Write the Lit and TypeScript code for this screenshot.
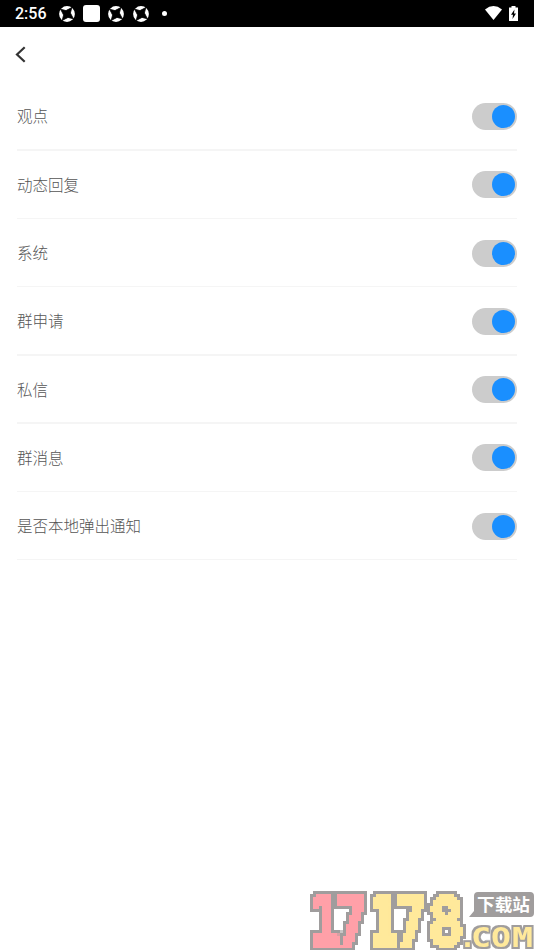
import { LitElement, html, svg, css } from 'lit'

const DIGITS = [
  { text: '1', x: 310, size: 67, width: 30, color: '#ffa0a8' },
  { text: '7', x: 336, size: 67, width: 32, color: '#ffa0a8' },
  { text: '1', x: 369, size: 67, width: 30, color: '#ffe99b' },
  { text: '7', x: 395, size: 67, width: 32, color: '#ffe99b' },
  { text: '8', x: 428, size: 66, width: 36, color: '#ffe99b' }
]

const SUFFIX = [
  { text: '.', x: 459, width: 17 },
  { text: 'C', x: 471, width: 20 },
  { text: 'O', x: 491, width: 20 },
  { text: 'M', x: 512, width: 21 }
]

export class StatusBar extends LitElement {
  static styles = [
    css`
      :host {
        display: flex;
        align-items: center;
        justify-content: space-between;
        height: 27px;
        box-sizing: border-box;
        padding: 0 16px 0 15px;
        background: #000;
        color: #fff;
        font: 500 16px Roboto, sans-serif;
      }
      .left,
      .right {
        display: flex;
        align-items: center;
      }
      .right {
        padding-bottom: 1px;
      }
      .time {
        width: 44px;
        line-height: 26px;
        padding-top: 1px;
      }
      .shutter {
        width: 16px;
        height: 16px;
      }
      .square {
        width: 17px;
        height: 17px;
        margin: 0 8px;
        border-radius: 3px;
        background: #fff;
      }
      .gap {
        margin-right: 9px;
      }
      .dot {
        width: 5px;
        height: 5px;
        margin-left: 13px;
        border-radius: 50%;
        background: #fff;
      }
      .wifi {
        width: 17px;
        height: 14px;
        margin-right: 7px;
      }
      .battery {
        width: 9px;
        height: 15px;
      }
    `
  ]

  shutter(extra = '') {
    return html`
      <svg class="shutter ${extra}" viewBox="0 0 16 16">
        <circle cx="8" cy="8" r="7.9" fill="#fff" />
        <path
          d="M1.6 3.2 7 4.6 12.8 1.6 11.4 7 14.4 12.8 9 11.4 3.2 14.4 4.6 9z"
          stroke="#000"
          stroke-width=".8"
        />
      </svg>
    `
  }

  render() {
    return html`
      <div class="left">
        <span class="time">2:56</span>
        ${this.shutter()}
        <span class="square"></span>
        ${this.shutter('gap')} ${this.shutter()}
        <span class="dot"></span>
      </div>
      <div class="right">
        <svg class="wifi" viewBox="0 0 17 14">
          <path d="M0 3.4Q8.5-3.2 17 3.4L8.5 14z" fill="#fff" />
        </svg>
        <svg class="battery" viewBox="0 0 9 15">
          <path d="M2.5 0h4v1.5H9V15H0V1.5h2.5z" fill="#fff" />
          <path d="M5.5 3.5 2 8.8h2L3.5 13 7 7.5H5z" />
        </svg>
      </div>
    `
  }
}
customElements.define('status-bar', StatusBar)

export class ToggleRow extends LitElement {
  static properties = {
    label: { type: String },
    on: { type: Boolean }
  }

  static styles = [
    css`
      :host {
        display: flex;
        flex-direction: column;
        height: 68.27px;
      }
      .content {
        flex: 1;
        display: flex;
        align-items: center;
        justify-content: space-between;
        padding-top: 1.2px;
      }
      .label {
        padding-bottom: 2.2px;
        font-size: 15.5px;
        font-weight: 300;
        line-height: 24px;
        color: #555;
      }
      .switch {
        display: flex;
        width: 45px;
        height: 27px;
        box-sizing: border-box;
        padding: 2px;
        border: none;
        border-radius: 14px;
        background: #ccc;
      }
      .switch.on {
        justify-content: flex-end;
      }
      .thumb {
        width: 23px;
        height: 23px;
        border-radius: 50%;
        background: #1a8fff;
      }
      .line {
        height: 1.4px;
        background: #f5f5f5;
      }
    `
  ]

  declare label: string
  declare on: boolean

  toggle() {
    this.on = !this.on
  }

  render() {
    return html`
      <div class="content">
        <span class="label">${this.label}</span>
        <button class="switch ${this.on ? 'on' : ''}" @click=${this.toggle}>
          <span class="thumb"></span>
        </button>
      </div>
      <div class="line"></div>
    `
  }
}
customElements.define('toggle-row', ToggleRow)

export class SiteMark extends LitElement {
  static styles = [
    css`
      :host {
        display: block;
      }
      .mark {
        display: block;
        width: 224px;
        height: 62px;
      }
      .digit {
        font-family: 'DejaVu Sans Mono', monospace;
        font-weight: bold;
        stroke-width: 3.6px;
      }
      .com {
        font: bold 26px 'DejaVu Sans Mono', monospace;
        fill: #ffe99b;
      }
      .tag {
        font: bold 17px 'Noto Sans CJK SC', sans-serif;
        fill: #fff;
      }
    `
  ]

  render() {
    return html`
      <svg class="mark" viewBox="310 888 224 62">
        <defs>
          <!-- samples one point per 3px cell and grows it into a block -->
          <filter
            id="blocks"
            filterUnits="userSpaceOnUse"
            x="310"
            y="888"
            width="160"
            height="66"
            color-interpolation-filters="sRGB"
          >
            <feFlood x="311" y="889" width="1" height="1" flood-color="#000" />
            <feComposite x="310" y="888" width="3" height="3" />
            <feTile result="grid" />
            <feComposite in="SourceGraphic" in2="grid" operator="in" />
            <feMorphology operator="dilate" radius="1" />
            <feComponentTransfer result="fill">
              <feFuncA type="linear" slope="100" intercept="-50" />
            </feComponentTransfer>
            <feMorphology operator="dilate" radius="3" result="grown" />
            <feFlood flood-color="#a09d9d" />
            <feComposite in2="grown" operator="in" result="edge" />
            <feMerge>
              <feMergeNode in="edge" />
              <feMergeNode in="fill" />
            </feMerge>
          </filter>
          <filter
            id="outline"
            filterUnits="userSpaceOnUse"
            x="460"
            y="920"
            width="78"
            height="34"
            color-interpolation-filters="sRGB"
          >
            <feMorphology in="SourceAlpha" operator="dilate" radius="2" result="grown" />
            <feFlood flood-color="#a09d9d" />
            <feComposite in2="grown" operator="in" result="edge" />
            <feMerge>
              <feMergeNode in="edge" />
              <feMergeNode in="SourceGraphic" />
            </feMerge>
          </filter>
        </defs>
        <g filter="url(#blocks)">
          ${DIGITS.map(
            (d) => svg`<text class="digit" x=${d.x} y="945" font-size=${d.size} fill=${d.color}
              stroke=${d.color} textLength=${d.width} lengthAdjust="spacingAndGlyphs">${d.text}</text>`
          )}
        </g>
        <g filter="url(#outline)">
          ${SUFFIX.map(
            (s) => svg`<text class="com" x=${s.x} y="947" textLength=${s.width}
              lengthAdjust="spacingAndGlyphs">${s.text}</text>`
          )}
        </g>
        <path d="M478 892h52q4 0 4 4v17q0 4-4 4h-61l5-6v-15q0-4 4-4z" fill="#a09d9d" />
        <text class="tag" x="477" y="911" textLength="53" lengthAdjust="spacingAndGlyphs">下载站</text>
      </svg>
    `
  }
}
customElements.define('site-mark', SiteMark)

export class AppRoot extends LitElement {
  static styles = [
    css`
      :host {
        display: flex;
        flex-direction: column;
        height: 950px;
        overflow: hidden;
        background: #fff;
        font-family: 'Noto Sans CJK SC', sans-serif;
      }
      .nav {
        display: flex;
        align-items: center;
        height: 55.5px;
        padding-left: 15px;
      }
      .back {
        width: 11px;
        height: 17px;
      }
      .list {
        flex: 1;
        padding: 0 17px;
      }
      .mark {
        align-self: flex-end;
      }
    `
  ]

  render() {
    const labels = ['观点', '动态回复', '系统', '群申请', '私信', '群消息', '是否本地弹出通知']
    return html`
      <status-bar></status-bar>
      <div class="nav">
        <svg class="back" viewBox="0 0 11 17">
          <path d="M9.7 1.2 2 8.5l7.7 7.3" fill="none" stroke="#333" stroke-width="2.2" />
        </svg>
      </div>
      <div class="list">
        ${labels.map((label) => html`<toggle-row label=${label} on></toggle-row>`)}
      </div>
      <site-mark class="mark"></site-mark>
    `
  }
}
customElements.define('app-root', AppRoot)
